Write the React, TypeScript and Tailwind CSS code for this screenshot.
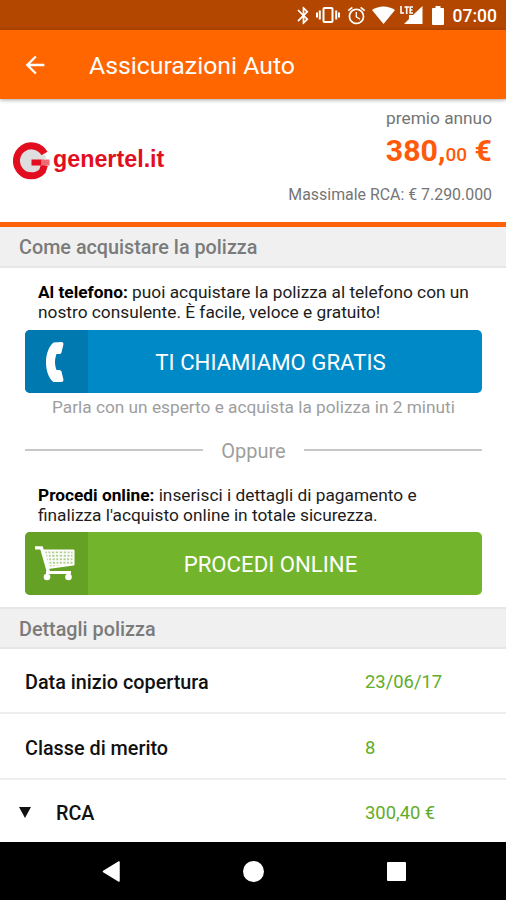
import React from "react";
import { MdAccessAlarm, MdArrowBack, MdBluetooth } from "react-icons/md";

interface DetailRow {
  label: string;
  value: string;
  expandable?: boolean;
}

const DETAILS: DetailRow[] = [
  { label: "Data inizio copertura", value: "23/06/17" },
  { label: "Classe di merito", value: "8" },
  { label: "RCA", value: "300,40 €", expandable: true },
];

export default function App() {
  return (
    <div className="flex h-[900px] w-[506px] flex-col overflow-hidden bg-white font-['Roboto',sans-serif] whitespace-nowrap">
      <StatusBar />
      <header className="z-10 flex h-[69px] shrink-0 items-center bg-[#ff6600] pl-[21px] text-white shadow-[0_1px_4px_rgba(0,0,0,0.35)]">
        <MdArrowBack className="h-[28px] w-[28px]" />
        <h1 className="ml-[40px] pt-[3px] text-[24.8px] leading-8">Assicurazioni Auto</h1>
      </header>

      <QuoteSummary />

      <SectionTitle className="h-[41px]">Come acquistare la polizza</SectionTitle>
      <section className="flex h-[339px] shrink-0 flex-col px-6 pl-[25px]">
        <p className="mt-[14px] pl-[13px] text-[17.3px] leading-[20px] text-[#1c1c1c]">
          <b className="font-bold text-black">Al telefono:</b> puoi acquistare la polizza al telefono con un
          <br />
          nostro consulente. È facile, veloce e gratuito!
        </p>
        <ActionButton
          label="TI CHIAMIAMO GRATIS"
          className="mt-[8px] bg-[#0089c7]"
          iconClassName="bg-[#0079b0]"
          icon={<PhoneIcon />}
        />
        <p className="mt-[4px] text-center text-[17.25px] leading-[21px] text-[#9e9e9e]">
          Parla con un esperto e acquista la polizza in 2 minuti
        </p>
        <div className="mt-[21px] flex h-[24px] items-center text-[20px] text-[#9e9e9e]">
          <span className="mb-[2px] h-[2px] flex-1 bg-[#c8c8c8]" />
          <span className="w-[101px] text-center leading-6">Oppure</span>
          <span className="mb-[2px] h-[2px] flex-1 bg-[#c8c8c8]" />
        </div>
        <p className="mt-[22px] pl-[13px] text-[17.3px] leading-[20px] text-[#1c1c1c]">
          <b className="font-bold text-black">Procedi online:</b> inserisci i dettagli di pagamento e
          <br />
          finalizza l'acquisto online in totale sicurezza.
        </p>
        <ActionButton
          label="PROCEDI ONLINE"
          className="mt-[7px] bg-[#72b52c]"
          iconClassName="bg-[#64a124]"
          icon={<CartIcon />}
        />
      </section>

      <SectionTitle className="h-[42px] border-t-2">Dettagli polizza</SectionTitle>
      <ul className="flex flex-1 flex-col">
        {DETAILS.map((row) => (
          <li
            key={row.label}
            className="flex h-[66px] shrink-0 items-center border-b-2 border-[#eeeeee] pt-[5px] pl-[25px] first:h-[65px] last:h-[62px] last:border-b-0"
          >
            <span className="flex w-[340px] items-center text-[19.8px] font-medium text-[#111]">
              {row.expandable && (
                <svg className="-ml-[6px] mr-[25px] mb-[2px] h-[11px] w-3" viewBox="0 0 12 11">
                  <path d="M0 0h12L6 11z" fill="#111" />
                </svg>
              )}
              {row.label}
            </span>
            <span className="pb-[2px] text-[18.4px] text-[#62ac27]">{row.value}</span>
          </li>
        ))}
      </ul>

      <NavigationBar />
    </div>
  );
}

const StatusBar: React.FC = () => (
  <div className="flex h-[30px] shrink-0 items-center justify-end bg-[#b34700] pr-[9px] text-white">
    <MdBluetooth className="mr-[2px] h-[21px] w-[21px]" />
    <svg className="mr-[6px] h-[18px] w-6" viewBox="0 0 24 18" fill="currentColor">
      <path d="M0 6.500h2v5H0zM2.800 4.500h2v9h-2zM19.200 4.500h2v9h-2zM22 6.500h2v5h-2z" />
      <rect x="7.500" y="2" width="9" height="14" rx="1" fill="none" stroke="currentColor" strokeWidth="2" />
    </svg>
    <MdAccessAlarm className="mr-[5px] h-[21px] w-[21px]" />
    <svg className="mr-[4px] h-[18px] w-[23px]" viewBox="0 0 23 18" fill="currentColor">
      <path d="M0 4C6.500-.7 16.500-.7 23 4L11.500 18z" />
    </svg>
    <svg className="mr-[9px] h-[18px] w-[24px]" viewBox="0 0 24 18" fill="currentColor">
      <path d="M23.500 0v18H5l5-5V9h4z" />
      <path d="M2 0v7h3M5.500 1H10M7.700 1v7M14 1h-2.800v6H14M11 4h2.500" fill="none" stroke="currentColor" strokeWidth="1.600" />
    </svg>
    <svg className="mr-[9px] h-[19px] w-3" viewBox="0 0 12 19" fill="currentColor">
      <path d="M3.500 0h5v2H11q1 0 1 1v15q0 1-1 1H1q-1 0-1-1V3q0-1 1-1h2.500z" />
    </svg>
    <span className="pt-[2px] text-[17.5px] leading-5 font-medium">07:00</span>
  </div>
);

const QuoteSummary: React.FC = () => (
  <div className="flex h-[128px] shrink-0 justify-between border-b-[5px] border-[#ff6209] pr-[14px] pl-[13px]">
    <div className="mt-[43px] flex h-[38px] items-start text-[#e30d20]">
      <svg className="h-[38px] w-[38px] shrink-0" viewBox="0 0 38 38">
        <circle cx="18.500" cy="19" r="13" fill="#dedede" />
        <path d="M31.500 11.500A15 15 0 1 0 29.500 29L31.500 23" fill="none" stroke="#e30d20" strokeWidth="7" />
        <path d="M18.500 17.500h10v6h-10z" fill="#e30d20" />
        <path d="M28 17.500h8.500v6H28z" fill="#ee6b76" />
        <path d="M26 13h6l1 3.500h-8z" fill="#dedede" />
      </svg>
      <span className="ml-[2px] pt-[4px] font-['Liberation_Sans',sans-serif] text-[23.3px] leading-[26px] font-bold">
        genertel.it
      </span>
    </div>
    <div className="flex flex-col items-end text-[#757575]">
      <span className="mt-[8px] text-[17.3px] leading-[22px]">premio annuo</span>
      <span className="mt-[2px] h-[40px] text-[30.3px] leading-[40px] font-bold text-[#ff5a0a]">
        380,<span className="text-[19px] font-medium">00</span> €
      </span>
      <span className="mt-[13px] text-[15.9px] leading-[22px]">Massimale RCA: € 7.290.000</span>
    </div>
  </div>
);

const SectionTitle: React.FC<{ className: string; children: React.ReactNode }> = ({ className, children }) => (
  <h2
    className={`flex shrink-0 items-center border-b-2 border-[#e6e6e6] bg-[#f0f0f0] pt-[3px] pl-[19px] text-[19.8px] font-medium text-[#7b7b7b] ${className}`}
  >
    {children}
  </h2>
);

interface ActionButtonProps {
  label: string;
  className: string;
  iconClassName: string;
  icon: React.ReactNode;
}

const ActionButton: React.FC<ActionButtonProps> = ({ label, className, iconClassName, icon }) => (
  <button className={`flex h-[63px] w-full shrink-0 overflow-hidden rounded-[5px] text-white ${className}`}>
    <span className={`flex h-full w-[63px] items-center justify-center ${iconClassName}`}>{icon}</span>
    <span className="flex h-full flex-1 items-center justify-center pt-[2px] pr-[29px] text-[22.2px]">{label}</span>
  </button>
);

const PhoneIcon: React.FC = () => (
  <svg className="-ml-[4px] h-[40px] w-[18px]" viewBox="0 0 18 40" fill="#fff">
    <path d="M7.500.5 15.500 0q2 0 2 2l-2 8.500q-.5 1.500-2 1.500H10.500C8.500 17 8.500 23 10.500 28h3q1.500 0 2 1.500l2 8.500q0 2-2 2h-8C-2.500 32-2.500 9 7.500.5z" />
  </svg>
);

const CartIcon: React.FC = () => (
  <svg className="-ml-[3px] h-[35px] w-10" viewBox="0 0 40 35" fill="none" stroke="#fff">
    <path d="M0 1.800h6.500L14 28" strokeWidth="3.200" />
    <path d="M9 4.500h29.500v14L13 22z" fill="#fff" fillOpacity="0.500" strokeWidth="2" strokeLinejoin="round" />
    <path
      d="M10 8h28M11 11.500h27M12 15h26M12 18.500h22M12.500 5l2 16M16 5l1.500 16M20 5l1 15.500M24 5v15M28 5l-.5 15M32 5l-1 14M35.500 5l-1 14"
      strokeWidth="1.500"
    />
    <path d="M11 26.500h25" strokeWidth="3" />
    <circle cx="12" cy="31" r="3.300" fill="#fff" stroke="none" />
    <circle cx="33.500" cy="31" r="3.300" fill="#fff" stroke="none" />
  </svg>
);

const NavigationBar: React.FC = () => (
  <nav className="flex h-[58px] shrink-0 items-center justify-between bg-black pr-[100px] pl-[102px]">
    <svg className="h-[21px] w-[18px]" viewBox="0 0 18 21">
      <path d="M17 1v19L1.500 10.500z" fill="#fff" stroke="#fff" strokeWidth="1.500" strokeLinejoin="round" />
    </svg>
    <span className="h-[21px] w-[21px] rounded-full bg-white" />
    <span className="h-[19px] w-[19px] rounded-[1px] bg-white" />
  </nav>
);
